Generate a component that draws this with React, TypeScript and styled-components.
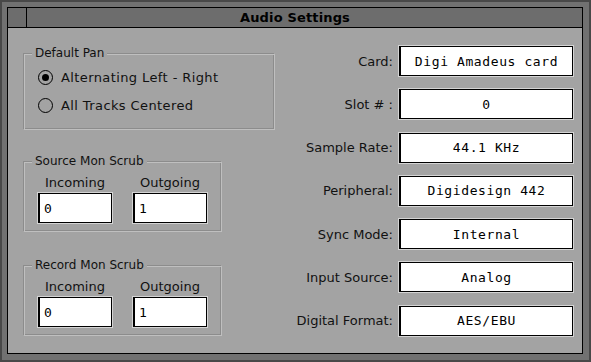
import React from "react";
import styled, { createGlobalStyle } from "styled-components";

const GlobalStyle = createGlobalStyle`
  html, body {
    margin: 0;
    padding: 0;
    background: #454545;
  }
  body {
    font-family: "DejaVu Sans", "Liberation Sans", sans-serif;
    color: #111;
  }
`;

// window chrome
const Window = styled.div`
  width: 591px;
  height: 362px;
  box-sizing: border-box;
  background: #717171;
  border: 2px solid #484848;
  padding: 5px 6px 6px 5px;
`;

const Panel = styled.div`
  height: 100%;
  box-sizing: border-box;
  border: 1px solid #000;
  background: #a3a3a3;
  display: flex;
  flex-direction: column;
`;

const TitleBar = styled.div`
  height: 20px;
  box-sizing: border-box;
  background: #6d6d6d;
  border-bottom: 1px solid #000;
  display: flex;
  align-items: center;
`;

const CloseBox = styled.div`
  width: 19px;
  height: 100%;
  box-sizing: border-box;
  border-right: 1px solid #000;
`;

const Title = styled.div`
  flex: 1;
  text-align: center;
  font-weight: bold;
  font-size: 13px;
  letter-spacing: 0.15px;
  color: #000;
`;

const Spacer = styled.div`
  width: 19px;
`;

const Body = styled.div`
  flex: 1;
  display: flex;
  justify-content: space-between;
  padding: 18px 9px 0 15px;
`;

// left side
const LeftColumn = styled.div`
  display: flex;
  flex-direction: column;
  align-items: flex-start;
`;

const Group = styled.fieldset<{ $width: number; $gap?: number }>`
  width: ${(p) => p.$width}px;
  box-sizing: border-box;
  margin: ${(p) => p.$gap ?? 0}px 0 0 0;
  padding: 0;
  border-style: solid;
  border-width: 1px;
  border-color: #8c8c8c #bfbfbf #bfbfbf #8c8c8c;
  box-shadow: inset 1px 1px 0 #bfbfbf, inset -1px -1px 0 #8c8c8c;
`;

const Legend = styled.legend`
  margin-left: 8px;
  padding: 0 3px;
  font-size: 12px;
  line-height: 14px;
  background: #a3a3a3;
`;

const RadioList = styled.div`
  padding: 3px 0 10px 14px;
`;

const RadioRow = styled.div`
  height: 28px;
  display: flex;
  align-items: center;
  gap: 8px;
  font-size: 13px;
  letter-spacing: 0.4px;
`;

const RadioCircle = styled.span<{ $on?: boolean }>`
  width: 15px;
  height: 15px;
  box-sizing: border-box;
  border: 1.5px solid #000;
  border-radius: 50%;
  display: flex;
  align-items: center;
  justify-content: center;

  &::after {
    content: "";
    width: 7px;
    height: 7px;
    border-radius: 50%;
    background: ${(p) => (p.$on ? "#000" : "transparent")};
  }
`;

const ScrubRow = styled.div`
  display: flex;
  gap: 21px;
  padding: 8px 0 8px 14px;
`;

const ScrubField = styled.div`
  display: flex;
  flex-direction: column;
  align-items: center;
  gap: 3px;
`;

const SmallLabel = styled.div`
  font-size: 13px;
  line-height: 14px;
`;

const ValueBox = styled.div<{ $align?: "left" | "center" }>`
  box-sizing: border-box;
  height: 30px;
  background: #fff;
  border: 1px solid #000;
  border-left-width: 2px;
  box-shadow: 0 0 0 1px #d4d4d4;
  display: flex;
  align-items: center;
  justify-content: ${(p) => (p.$align === "left" ? "flex-start" : "center")};
  padding: 0 4px;
  font-family: "DejaVu Sans Mono", "Liberation Mono", monospace;
  font-size: 13px;
  letter-spacing: 0.6px;
  color: #000;
  white-space: nowrap;
`;

const SmallBox = styled(ValueBox)`
  width: 74px;
`;

// right side
const SettingsGrid = styled.div`
  display: grid;
  grid-template-columns: auto 174px;
  grid-auto-rows: 30px;
  column-gap: 6px;
  row-gap: 13.3px;
  align-items: center;
`;

const FieldLabel = styled.div`
  font-size: 13px;
  text-align: right;
`;

const settings = [
  { label: "Card:", value: "Digi Amadeus card" },
  { label: "Slot # :", value: "0" },
  { label: "Sample Rate:", value: "44.1 KHz" },
  { label: "Peripheral:", value: "Digidesign 442" },
  { label: "Sync Mode:", value: "Internal" },
  { label: "Input Source:", value: "Analog" },
  { label: "Digital Format:", value: "AES/EBU" },
];

function ScrubGroup({ title, gap }: { title: string; gap: number }) {
  return (
    <Group $width={199} $gap={gap}>
      <Legend>{title}</Legend>
      <ScrubRow>
        <ScrubField>
          <SmallLabel>Incoming</SmallLabel>
          <SmallBox $align="left">0</SmallBox>
        </ScrubField>
        <ScrubField>
          <SmallLabel>Outgoing</SmallLabel>
          <SmallBox $align="left">1</SmallBox>
        </ScrubField>
      </ScrubRow>
    </Group>
  );
}

export default function App() {
  return (
    <>
      <GlobalStyle />
      <Window>
        <Panel>
          <TitleBar>
            <CloseBox />
            <Title>Audio Settings</Title>
            <Spacer />
          </TitleBar>
          <Body>
            <LeftColumn>
              <Group $width={252}>
                <Legend>Default Pan</Legend>
                <RadioList>
                  <RadioRow>
                    <RadioCircle $on />
                    Alternating Left - Right
                  </RadioRow>
                  <RadioRow>
                    <RadioCircle />
                    All Tracks Centered
                  </RadioRow>
                </RadioList>
              </Group>
              <ScrubGroup title="Source Mon Scrub" gap={24} />
              <ScrubGroup title="Record Mon Scrub" gap={26} />
            </LeftColumn>
            <SettingsGrid>
              {settings.map((s) => (
                <React.Fragment key={s.label}>
                  <FieldLabel>{s.label}</FieldLabel>
                  <ValueBox>{s.value}</ValueBox>
                </React.Fragment>
              ))}
            </SettingsGrid>
          </Body>
        </Panel>
      </Window>
    </>
  );
}
